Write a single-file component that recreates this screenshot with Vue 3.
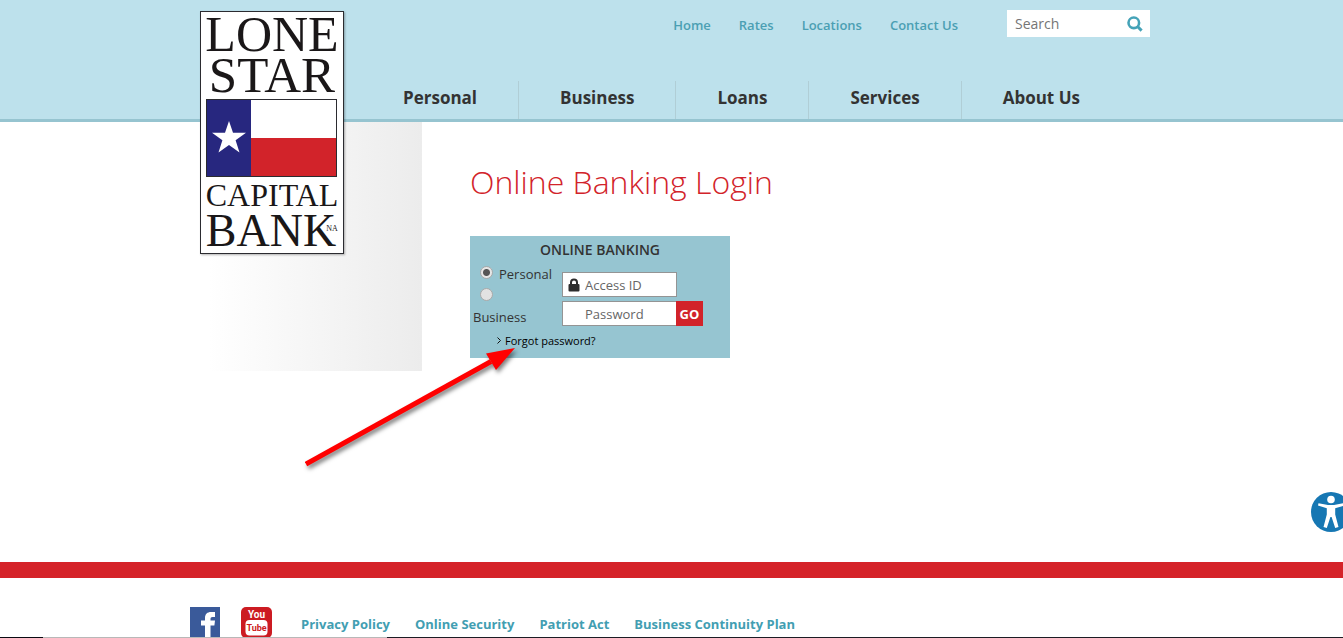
<script setup>
import { ref } from 'vue'

const topLinks = ['Home', 'Rates', 'Locations', 'Contact Us']
const mainLinks = ['Personal', 'Business', 'Loans', 'Services', 'About Us']
const footerLinks = ['Privacy Policy', 'Online Security', 'Patriot Act', 'Business Continuity Plan']

const account = ref('personal')
const query = ref('')
const accessId = ref('')
const password = ref('')
</script>

<template>
  <div class="page">
    <header class="header">
      <div class="container header-inner">
        <a class="logo" href="#" aria-label="Lone Star Capital Bank">
          <svg viewBox="0 0 144 243" width="144" height="243" aria-hidden="true">
            <rect x="0.5" y="0.5" width="143" height="242" fill="#fff" stroke="#2b2b30" />
            <g font-family="'Liberation Serif', serif" fill="#1a1718" text-anchor="middle">
              <text x="72" y="40" font-size="50">LONE</text>
              <text x="72" y="81" font-size="51">STAR</text>
              <text x="72" y="195" font-size="32">CAPITAL</text>
              <text x="71" y="235" font-size="46">BANK</text>
              <text x="132" y="220" font-size="8">NA</text>
            </g>
            <rect x="7" y="88" width="44" height="77" fill="#27277f" />
            <rect x="51" y="88" width="86" height="39" fill="#fff" />
            <rect x="51" y="127" width="86" height="38" fill="#d2232a" />
            <rect x="6.5" y="88.5" width="130" height="77" fill="none" stroke="#2b2b30" />
            <path fill="#fff" d="M29 110l4 11.700h13l-10.400 7.500 3.900 12.300L29 134l-10.500 7.500 3.900-12.300L12 121.700h13z" />
          </svg>
        </a>
        <div class="header-body">
          <div class="top-row">
            <nav class="top-nav" aria-label="Site">
              <a v-for="link in topLinks" :key="link" href="#">{{ link }}</a>
            </nav>
            <form class="search" role="search" @submit.prevent>
              <input v-model="query" type="text" placeholder="Search" aria-label="Search" />
              <button type="submit" aria-label="Submit search">
                <svg viewBox="0 0 16 16" width="16" height="16" aria-hidden="true">
                  <circle cx="6.800" cy="6.800" r="5.300" fill="none" stroke="#45a3b8" stroke-width="2.600" />
                  <path d="M10.300 10.300l4.300 4.300" stroke="#45a3b8" stroke-width="3" />
                </svg>
              </button>
            </form>
          </div>
          <nav class="main-nav" aria-label="Main">
            <a v-for="link in mainLinks" :key="link" href="#">{{ link }}</a>
          </nav>
        </div>
      </div>
    </header>

    <main class="container main">
      <aside class="side"></aside>
      <section class="content">
        <h1>Online Banking Login</h1>
        <form class="login" @submit.prevent>
          <h2>ONLINE BANKING</h2>
          <div class="login-body">
            <div class="types">
              <label class="type">
                <input v-model="account" type="radio" name="account" value="personal" />
                <span>Personal</span>
              </label>
              <label class="type stacked">
                <input v-model="account" type="radio" name="account" value="business" />
                <span>Business</span>
              </label>
            </div>
            <div class="fields">
              <div class="field">
                <input v-model="accessId" type="text" placeholder="Access ID" aria-label="Access ID" />
                <svg class="lock" viewBox="0 0 12 14" width="12" height="14" aria-hidden="true">
                  <path d="M3 7V4.500a3 3 0 0 1 6 0V7" fill="none" stroke="#2d2d2d" stroke-width="2" />
                  <rect x="0.500" y="6" width="11" height="7.500" rx="1" fill="#2d2d2d" />
                </svg>
              </div>
              <div class="field">
                <input v-model="password" type="password" placeholder="Password" aria-label="Password" />
                <button class="go" type="submit">GO</button>
              </div>
            </div>
          </div>
          <a class="forgot" href="#">
            <svg viewBox="0 0 4 7" width="4" height="7" aria-hidden="true">
              <path d="M0.500 0.500l3 3-3 3" fill="none" stroke="#111" />
            </svg>
            Forgot password?
          </a>
        </form>
      </section>
      <svg class="arrow" viewBox="0 0 220 130" width="220" height="130" aria-hidden="true">
        <path d="M1 119L186 16.500" stroke="#f00" stroke-width="5" fill="none" />
        <path d="M210 3L181 8.500L191 25z" fill="#f00" />
      </svg>
    </main>

    <button class="access" type="button" aria-label="Accessibility options">
      <svg viewBox="0 0 40 40" width="40" height="40" aria-hidden="true">
        <circle cx="20" cy="20" r="20" fill="#1677b3" />
        <circle cx="20" cy="7.500" r="3.800" fill="#fff" />
        <path fill="#fff" d="M7.500 11.200L17 13h6l9.500-1.800.5 2.400-8.800 2.600v6.300L27.500 35l-3.300 1L20.600 25h-1.200L15.800 36l-3.300-1 3.300-12.500v-6.300L7 13.600z" />
      </svg>
    </button>

    <footer class="footer">
      <div class="container footer-inner">
        <a class="social facebook" href="#" aria-label="Facebook">
          <svg viewBox="0 0 30 30" width="30" height="30" aria-hidden="true">
            <rect width="30" height="30" fill="#3a5a9a" />
            <path fill="#fff" d="M15 30V18.500h-4v-5h4V11c0-4 2.400-6 6-6h4v5h-2.500c-1.500 0-2 .7-2 2v1.500H25l-.6 5h-3.900V30z" />
          </svg>
        </a>
        <a class="social youtube" href="#" aria-label="YouTube">
          <svg viewBox="0 0 31 31" width="31" height="31" aria-hidden="true">
            <rect width="31" height="31" rx="5" fill="#cc1b22" />
            <rect x="4.500" y="13" width="22" height="15.500" rx="4" fill="#fff" />
            <g font-family="Roboto, 'Liberation Sans', sans-serif" font-weight="700" text-anchor="middle">
              <text x="15.500" y="11" font-size="10" fill="#fff">You</text>
              <text x="15.500" y="24" font-size="9" fill="#cc1b22">Tube</text>
            </g>
          </svg>
        </a>
        <nav class="footer-nav" aria-label="Footer">
          <a v-for="link in footerLinks" :key="link" href="#">{{ link }}</a>
        </nav>
      </div>
      <div class="edge"></div>
    </footer>
  </div>
</template>

<style>
body {
  margin: 0;
  background: #fff;
}
</style>

<style scoped>
* {
  box-sizing: border-box;
}

.page {
  position: relative;
  display: flex;
  flex-direction: column;
  min-height: 100vh;
  overflow: hidden;
  font-family: 'Open Sans', 'Liberation Sans', sans-serif;
  font-size: 13px;
  color: #333;
}

a {
  color: inherit;
  text-decoration: none;
}

input,
button {
  font-family: inherit;
  margin: 0;
}

.container {
  position: relative;
  width: 100%;
  max-width: 963px;
  margin: 0 auto;
}

.header {
  position: relative;
  z-index: 1;
  background: #bde1ec;
  border-bottom: 3px solid #96c4d0;
}

.logo {
  position: absolute;
  top: 11px;
  left: 10px;
  height: 243px;
  box-shadow: 1px 1px 2px rgba(0, 0, 0, 0.3);
}

.logo svg,
.social svg {
  display: block;
  overflow: visible;
}

.header-body {
  padding: 10px 3px 0 172px;
}

.top-row {
  display: flex;
  justify-content: flex-end;
  align-items: center;
  gap: 49px;
}

.top-nav {
  display: flex;
  gap: 28px;
  padding-top: 2px;
  font-weight: 600;
  color: #4b9fb3;
}

.search {
  display: flex;
  align-items: center;
  width: 143px;
  height: 27px;
  background: #fff;
}

.search input {
  flex: 1;
  min-width: 0;
  padding: 0 0 0 8px;
  border: 0;
  outline: 0;
  background: none;
  font-size: 14px;
  color: #333;
}

.search button {
  display: flex;
  padding: 0 7px 0 0;
  border: 0;
  background: none;
}

.main-nav {
  display: flex;
  margin-top: 44px;
}

.main-nav a {
  padding: 0 41px 4px;
  font-size: 17px;
  line-height: 34px;
  font-weight: 700;
  color: #333;
}

.main-nav a + a {
  border-left: 1px solid #b0ced6;
}

.main {
  flex: 1;
  display: flex;
  align-items: flex-start;
  gap: 48px;
}

.side {
  width: 232px;
  height: 249px;
  background: linear-gradient(to right, #fff 8%, #ececec);
}

h1 {
  margin: 36px 0 30px;
  font-size: 32px;
  line-height: 48px;
  font-weight: 300;
  color: #d2232a;
}

.login {
  width: 260px;
  padding: 4px 0 9px;
  background: #96c5d1;
}

h2 {
  margin: 0;
  font-size: 14px;
  line-height: 20px;
  font-weight: 600;
  text-align: center;
}

.login-body {
  display: flex;
  padding-top: 4px;
}

.types {
  width: 92px;
}

.type {
  display: flex;
  align-items: flex-start;
  gap: 6px;
  padding-left: 10px;
  line-height: 20px;
}

.stacked {
  flex-direction: column;
  padding-top: 2px;
}

.stacked span {
  margin-left: -7px;
}

.type input {
  appearance: none;
  width: 13px;
  height: 13px;
  margin-top: 2px;
  border: 1px solid #a9a9a9;
  border-radius: 50%;
  background: #e2e2e2;
}

.type input:checked {
  background: radial-gradient(circle, #555 0 3px, #e6e6e6 4px);
}

.fields {
  display: flex;
  flex-direction: column;
  gap: 4px;
  padding-top: 8px;
}

.field {
  position: relative;
  display: flex;
  height: 25px;
}

.field input {
  width: 115px;
  padding: 0 4px 0 22px;
  border: 1px solid #949494;
  border-radius: 0;
  background: #fff;
  font-size: 13px;
}

input::placeholder {
  color: #757575;
  opacity: 1;
}

.field input::placeholder {
  color: #666;
}

.lock {
  position: absolute;
  top: 6px;
  left: 6px;
}

.go {
  width: 27px;
  margin-left: -1px;
  padding: 0;
  border: 0;
  background: #d2232a;
  color: #fff;
  font-size: 13px;
  font-weight: 700;
}

.forgot {
  display: flex;
  align-items: center;
  gap: 4px;
  margin-top: 5px;
  padding-left: 27px;
  font-size: 11px;
  line-height: 17px;
  color: #000;
}

.arrow {
  position: absolute;
  top: 223px;
  left: 115px;
  filter: drop-shadow(2px 3px 2px rgba(0, 0, 0, 0.5));
  pointer-events: none;
}

.access {
  position: absolute;
  right: -8px;
  bottom: 106px;
  padding: 0;
  border: 0;
  background: none;
  line-height: 0;
}

.footer {
  border-top: 16px solid #d52329;
}

.footer-inner {
  display: flex;
  align-items: flex-start;
  padding-top: 29px;
}

.youtube {
  height: 30px;
  margin-left: 21px;
}

.footer-nav {
  display: flex;
  flex-wrap: wrap;
  gap: 25px;
  margin-left: 29px;
  padding-top: 8px;
  font-weight: 700;
  line-height: 18px;
  color: #429eb2;
}

.edge {
  position: relative;
  height: 1px;
  background: linear-gradient(to right, #0a0a12 43px, #b8b8b8 43px 387px, #1c1c24 387px);
}
</style>
